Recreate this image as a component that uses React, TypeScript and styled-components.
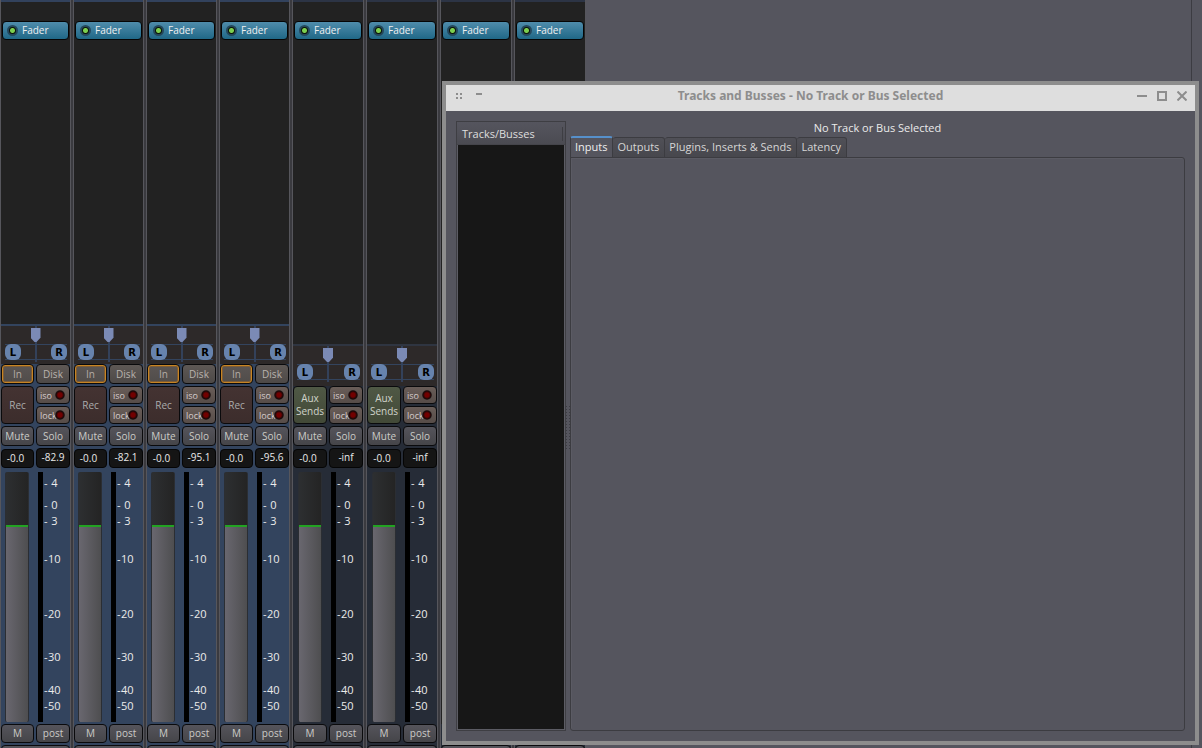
import React from "react";
import styled, { createGlobalStyle, css } from "styled-components";

const GlobalStyle = createGlobalStyle`
  * { box-sizing: border-box; }
  body {
    margin: 0;
    overflow: hidden;
    background: #55555e;
    color: #dedede;
    font: 11px/14px "Open Sans", "Noto Sans", sans-serif;
  }
  button, input { font: inherit; margin: 0; padding: 0; color: inherit; }
  ul { list-style: none; margin: 0; padding: 0; }
`;

type Kind = "track" | "aux" | "bus";

interface StripData {
  kind: Kind;
  peak?: string;
}

const strips: StripData[] = [
  { kind: "track", peak: "-82.9" },
  { kind: "track", peak: "-82.1" },
  { kind: "track", peak: "-95.1" },
  { kind: "track", peak: "-95.6" },
  { kind: "aux", peak: "-inf" },
  { kind: "aux", peak: "-inf" },
  { kind: "bus" },
  { kind: "bus" },
];

const scale = [
  { label: "4", span: 22 },
  { label: "0", span: 16 },
  { label: "3", span: 38 },
  { label: "10", span: 55 },
  { label: "20", span: 43 },
  { label: "30", span: 33 },
  { label: "40", span: 16 },
  { label: "50", span: 16 },
];

const Desktop = styled.div`
  display: flex;
  height: 100vh;
  overflow: hidden;
  background: #3a3a3f;
`;

const Mixer = styled.main`
  display: flex;
  flex: none;
  gap: 2px;
`;

const BackdropArea = styled.div`
  display: flex;
  flex: 1;
  background: #55555e;
`;

const Backdrop = styled.div`
  flex: 1;
  margin-right: 10px;
  border-right: 1px solid #3c3c42;
`;

const StripFrame = styled.section<{ $kind: Kind }>`
  display: flex;
  flex-direction: column;
  flex: none;
  width: ${(p) => (p.$kind === "track" ? 71 : 72)}px;
  overflow: hidden;
  border: solid #56565c;
  border-width: 0 1px;
  background: ${(p) => (p.$kind === "track" ? "#33445e" : "#262c37")};
  font-size: 10px;
`;

const Processors = styled.div<{ $kind: Kind }>`
  flex: none;
  height: ${(p) => (p.$kind === "track" ? 324 : p.$kind === "aux" ? 344 : 724)}px;
  padding: 19px 1px 0;
  border-top: 2px solid ${(p) => (p.$kind === "track" ? "#32425d" : "#2c3445")};
  background: #222222;
`;

const Processor = styled.button`
  display: flex;
  align-items: center;
  gap: 4px;
  width: 100%;
  height: 19px;
  padding-left: 4px;
  border: 1px solid #050505;
  border-radius: 4px;
  background: linear-gradient(#4f8cab, #206887);
  color: #f0f0f0;
`;

const ProcessorName = styled.span`
  padding-bottom: 1px;
`;

const Dot = styled.span`
  flex: none;
  width: 11px;
  height: 11px;
  border: 2px solid #24485c;
  border-radius: 50%;
  background: radial-gradient(circle, #7ccf50 0 2px, #0b1408 3px);
`;

const Panner = styled.div<{ $kind: Kind }>`
  display: flex;
  flex-direction: column;
  flex: none;
  height: ${(p) => (p.$kind === "track" ? 40 : 42)}px;
  padding-top: 2px;
  border-top: 2px solid ${(p) => (p.$kind === "track" ? "#33445e" : "#2f3541")};
  background: linear-gradient(#33415a, #33415a) top / 2px 36px no-repeat #2d2929;
`;

const PanSlider = styled.input`
  appearance: none;
  width: 100%;
  height: 14px;
  background: none;
  &::-webkit-slider-thumb {
    appearance: none;
    width: 10px;
    height: 14px;
    background: #7b8ab5;
    clip-path: polygon(0 0, 100% 0, 100% 70%, 60% 100%, 40% 100%, 0 70%);
  }
`;

const PanEnds = styled.div`
  display: flex;
  justify-content: space-between;
  margin: 2px 3px 0 4px;
  height: 16px;
  border: solid #33445e;
  border-width: 1px 0;
`;

const PanEnd = styled.span`
  width: 16px;
  height: 16px;
  margin-top: -1px;
  border-radius: 6px;
  background: #6783ad;
  color: #000;
  font: bold 10px/18px "DejaVu Sans", sans-serif;
  text-align: center;
`;

const Pair = styled.div<{ $kind: Kind }>`
  display: grid;
  flex: none;
  grid-template-columns: ${(p) => (p.$kind === "track" ? "33px 34px" : "34px 34px")};
  justify-content: space-between;
  margin-bottom: 2px;
`;

const Stack = styled.div`
  display: grid;
  gap: 2px;
  min-width: 0;
`;

type Tone = "input" | "disk" | "rec" | "aux" | "small" | "plain";

const tones: Record<Tone, ReturnType<typeof css>> = {
  input: css`
    background: linear-gradient(#5b5553, #504c4a);
    box-shadow: inset 0 0 0 1px #c78423, inset 0 0 0 2px #7d5c35;
    color: #b4aca5;
  `,
  disk: css`
    background: linear-gradient(#5e5855, #4d4947);
    color: #b9b3ad;
  `,
  rec: css`
    background: linear-gradient(#443332, #3c2d2c);
    color: #ababab;
  `,
  aux: css`
    background: linear-gradient(#4f5845, #424937);
    color: #d0d3ca;
  `,
  small: css`
    background: linear-gradient(#695d58, #564c48);
    color: #d5cccc;
  `,
  plain: css`
    background: linear-gradient(#55545b, #454549);
    color: #cbcbc7;
  `,
};

const StripButton = styled.button<{ $tone: Tone; $height: number }>`
  width: 100%;
  min-width: 0;
  height: ${(p) => p.$height}px;
  border: 1px solid #0a0a0c;
  border-radius: 4px;
  line-height: 13px;
  ${(p) => tones[p.$tone]}
`;

const LedButton = styled(StripButton)`
  display: flex;
  align-items: center;
  justify-content: space-between;
  padding: 0 4px 0 3px;
  font-size: 9px;
`;

const Led = styled.span`
  flex: none;
  width: 10px;
  height: 10px;
  margin-left: -2px;
  border-radius: 50%;
  background: radial-gradient(circle, #720000 0 2px, #160808 4px, #3d3432 5px);
`;

const GainBox = styled.input`
  width: 100%;
  height: 19px;
  margin-top: 1px;
  padding: 0 4px 2px 0;
  border: 1px solid #050505;
  border-radius: 4px;
  background: #151515;
  color: #eaeaea;
  text-align: center;
`;

const PeakBox = styled.button`
  height: 20px;
  padding-bottom: 2px;
  border: 1px solid #050505;
  border-radius: 4px;
  background: #151515;
  color: #eaeaea;
`;

const Level = styled.div<{ $kind: Kind }>`
  display: flex;
  flex: 1 1 0;
  min-height: 0;
  margin: 2px 0;
  padding-left: ${(p) => (p.$kind === "track" ? 4 : 5)}px;
  overflow: hidden;
`;

const Fader = styled.input`
  appearance: none;
  writing-mode: vertical-lr;
  direction: rtl;
  width: 24px;
  height: auto;
  min-height: 0;
  margin-right: 9px;
  border: solid #2b2e33;
  border-width: 0 1px;
  border-radius: 2px;
  background:
    linear-gradient(90deg, #69676f, #4e4e50) bottom / 100% 78% no-repeat,
    linear-gradient(90deg, #2d2f31, #242424);
  &::-webkit-slider-thumb {
    appearance: none;
    width: 22px;
    height: 2px;
    background: #22a322;
  }
`;

const Meter = styled.div`
  width: 5px;
  background: #000;
`;

const Scale = styled.ul`
  padding: 4px 0 0 1px;
  font-size: 11px;
`;

const Mark = styled.li<{ $span: number }>`
  display: flex;
  width: 17px;
  height: ${(p) => p.$span}px;
  color: #ebebeb;
`;

const MarkValue = styled.span`
  flex: 1;
  text-align: center;
`;

const StripFooter = styled.div`
  flex: none;
  height: 3px;
`;

const Window = styled.div`
  position: absolute;
  top: 81px;
  right: 3px;
  bottom: 3px;
  left: 442px;
  display: flex;
  flex-direction: column;
  border: 4px solid #8d8d8d;
  background: #55555e;
`;

const TitleBar = styled.header`
  display: flex;
  align-items: center;
  flex: none;
  height: 26px;
  padding: 0 3px 4px 9px;
  background: #dedede;
  color: #8d8d8d;
`;

const Title = styled.h1`
  flex: 1;
  margin: 0;
  font: bold 12px/16px "Noto Sans", "Open Sans", sans-serif;
  text-align: center;
`;

const TitleButton = styled.button`
  width: 20px;
  height: 16px;
  border: 0;
  background: none;
  line-height: 0;
`;

const WindowBody = styled.div`
  display: flex;
  flex: 1;
  padding: 10px;
`;

const RouteList = styled.section`
  display: flex;
  flex-direction: column;
  width: 110px;
  border: 1px solid #3e3e43;
  box-shadow: inset 0 0 0 1px #5c5c64;
`;

const RouteHeader = styled.h2`
  height: 23px;
  margin: 0;
  padding: 5px 5px 0;
  border-bottom: 1px solid #45454b;
  background:
    linear-gradient(#3e3e43, #3e3e43) 105px 5px / 1px 14px no-repeat,
    linear-gradient(#55555e, #4b4b52);
  font: inherit;
`;

const RouteRows = styled.div`
  flex: 1;
  margin: 0 1px 1px;
  background: #171717;
`;

const PaneHandle = styled.div`
  align-self: center;
  width: 4px;
  height: 46px;
  margin-top: 1px;
  background: repeating-linear-gradient(#55555e00 0 2px, #3c3c43 2px 3px);
  mask: linear-gradient(90deg, #000 1px, transparent 1px 3px, #000 3px);
`;

const Notebook = styled.section`
  display: flex;
  flex: 1;
  flex-direction: column;
`;

const Status = styled.p`
  height: 15px;
  margin: 0;
  text-align: center;
  color: #ebebeb;
`;

const TabRow = styled.div`
  display: flex;
  align-items: flex-end;
  height: 22px;
  margin-bottom: -1px;
`;

const Tab = styled.button<{ $active?: boolean }>`
  height: 21px;
  padding: 0 5px 2px 4px;
  border: 1px solid #3c3c41;
  border-left-width: 0;
  border-radius: 3px 3px 0 0;
  background: linear-gradient(#505057, #47474d);
  color: #d6d6d6;
  ${(p) =>
    p.$active &&
    css`
      height: 22px;
      border-top: 2px solid #5690cb;
      border-bottom: 0;
      border-left-width: 1px;
      background: #55555e;
      color: #eeeeee;
    `}
`;

const TabPanel = styled.div`
  flex: 1;
  border: 1px solid #3c3c41;
  border-radius: 0 3px 3px 3px;
  box-shadow: inset 1px 1px 0 #5b5b64;
`;

function Strip({ kind, peak }: StripData) {
  return (
    <StripFrame $kind={kind}>
      <Processors $kind={kind}>
        <Processor>
          <Dot />
          <ProcessorName>Fader</ProcessorName>
        </Processor>
      </Processors>
      {kind !== "bus" && (
        <>
          <Panner $kind={kind}>
            <PanSlider type="range" aria-label="Pan" defaultValue={50} />
            <PanEnds>
              <PanEnd>L</PanEnd>
              <PanEnd>R</PanEnd>
            </PanEnds>
          </Panner>
          {kind === "track" && (
            <Pair $kind={kind}>
              <StripButton $tone="input" $height={20}>In</StripButton>
              <StripButton $tone="disk" $height={20}>Disk</StripButton>
            </Pair>
          )}
          <Pair $kind={kind}>
            {kind === "track" ? (
              <StripButton $tone="rec" $height={38}>Rec</StripButton>
            ) : (
              <StripButton $tone="aux" $height={38}>
                Aux
                <br />
                Sends
              </StripButton>
            )}
            <Stack>
              <LedButton $tone="small" $height={18}>iso<Led /></LedButton>
              <LedButton $tone="small" $height={18}>lock<Led /></LedButton>
            </Stack>
          </Pair>
          <Pair $kind={kind}>
            <StripButton $tone="plain" $height={20}>Mute</StripButton>
            <StripButton $tone="plain" $height={20}>Solo</StripButton>
          </Pair>
          <Pair $kind={kind}>
            <GainBox aria-label="Gain" defaultValue="-0.0" />
            <PeakBox>{peak}</PeakBox>
          </Pair>
          <Level $kind={kind}>
            <Fader type="range" aria-label="Level" step={0.5} defaultValue={78.5} />
            <Meter />
            <Scale>
              {scale.map((m) => (
                <Mark key={m.label} $span={m.span}>
                  -<MarkValue>{m.label}</MarkValue>
                </Mark>
              ))}
            </Scale>
          </Level>
          <Pair $kind={kind}>
            <StripButton $tone="plain" $height={19}>M</StripButton>
            <StripButton $tone="plain" $height={19}>post</StripButton>
          </Pair>
        </>
      )}
      {kind === "bus" && <Level $kind={kind} />}
      <StripFooter>
        <StripButton $tone="plain" $height={19} aria-label="Comments" />
      </StripFooter>
    </StripFrame>
  );
}

export default function App() {
  return (
    <>
      <GlobalStyle />
      <Desktop>
        <Mixer>
          {strips.map((s, i) => (
            <Strip key={i} {...s} />
          ))}
        </Mixer>
        <BackdropArea>
          <Backdrop />
        </BackdropArea>
      </Desktop>
      <Window role="dialog" aria-labelledby="window-title">
        <TitleBar>
          <svg width="34" height="10" fill="#8d8d8d" aria-hidden="true">
            <path d="M1 2h2v2h-2zM5 2h2v2h-2zM1 6h2v2h-2zM5 6h2v2h-2zM21 2h6v2h-6z" />
          </svg>
          <Title id="window-title">Tracks and Busses - No Track or Bus Selected</Title>
          <TitleButton aria-label="Minimize">
            <svg width="10" height="10"><path d="M0 5h10" stroke="#8d8d8d" strokeWidth="2" /></svg>
          </TitleButton>
          <TitleButton aria-label="Maximize">
            <svg width="10" height="10"><path d="M1 1h8v8h-8z" fill="none" stroke="#8d8d8d" strokeWidth="2" /></svg>
          </TitleButton>
          <TitleButton aria-label="Close">
            <svg width="10" height="10"><path d="M0.5 0.5l9 9M9.5 0.5l-9 9" stroke="#8d8d8d" strokeWidth="2" /></svg>
          </TitleButton>
        </TitleBar>
        <WindowBody>
          <RouteList>
            <RouteHeader>Tracks/Busses</RouteHeader>
            <RouteRows />
          </RouteList>
          <PaneHandle />
          <Notebook>
            <Status>No Track or Bus Selected</Status>
            <TabRow role="tablist">
              <Tab role="tab" aria-selected="true" $active>Inputs</Tab>
              <Tab role="tab" aria-selected="false">Outputs</Tab>
              <Tab role="tab" aria-selected="false">Plugins, Inserts &amp; Sends</Tab>
              <Tab role="tab" aria-selected="false">Latency</Tab>
            </TabRow>
            <TabPanel role="tabpanel" />
          </Notebook>
        </WindowBody>
      </Window>
    </>
  );
}
